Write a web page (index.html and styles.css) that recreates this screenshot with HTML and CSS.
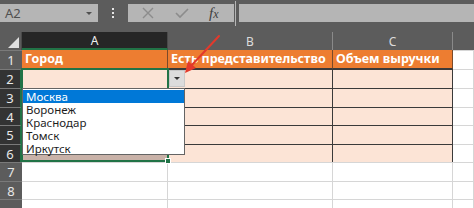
FILE: index.html
```html
<!DOCTYPE html>
<html lang="ru">
<head>
<meta charset="utf-8">
<link rel="stylesheet" href="styles.css">
</head>
<body>
<div class="app">
  <div class="fbar">
    <div class="namebox"><span class="nb-text">A2</span><span class="nb-caret"></span></div>
    <div class="dots"><i></i><i></i><i></i></div>
    <div class="fbtns">
      <svg class="ico" width="14" height="14" viewBox="0 0 14 14"><path d="M2 2 L12 12 M12 2 L2 12" stroke="#8c8c8c" stroke-width="1.4" fill="none"/></svg>
      <svg class="ico" width="16" height="14" viewBox="0 0 16 14"><path d="M2 7 L6 11 L14 3" stroke="#8c8c8c" stroke-width="1.6" fill="none"/></svg>
      <span class="fx"><i>f</i><span>x</span></span>
    </div>
    <div class="fsep"></div>
    <div class="finput"></div>
  </div>
  <div class="sheet">
    <div class="grid">
      <div class="corner"><span class="tri"></span></div>
      <div class="ch ch-sel">A</div>
      <div class="ch">B</div>
      <div class="ch">C</div>
      <div class="ch ch-last"></div>

      <div class="rh">1</div>
      <div class="c hd">Город</div>
      <div class="c hd">Есть представительство</div>
      <div class="c hd">Объем выручки</div>
      <div class="c e"></div>

      <div class="rh rh-sel">2</div>
      <div class="c p"></div>
      <div class="c p"></div>
      <div class="c p"></div>
      <div class="c e"></div>

      <div class="rh rh-sel">3</div>
      <div class="c ps"></div>
      <div class="c p"></div>
      <div class="c p"></div>
      <div class="c e"></div>

      <div class="rh rh-sel">4</div>
      <div class="c ps"></div>
      <div class="c p"></div>
      <div class="c p"></div>
      <div class="c e"></div>

      <div class="rh rh-sel">5</div>
      <div class="c ps"></div>
      <div class="c p"></div>
      <div class="c p"></div>
      <div class="c e"></div>

      <div class="rh rh-sel">6</div>
      <div class="c ps"></div>
      <div class="c p"></div>
      <div class="c p"></div>
      <div class="c e"></div>

      <div class="rh">7</div>
      <div class="c e"></div>
      <div class="c e"></div>
      <div class="c e"></div>
      <div class="c e"></div>

      <div class="rh">8</div>
      <div class="c e"></div>
      <div class="c e"></div>
      <div class="c e"></div>
      <div class="c e"></div>

      <div class="rh"></div>
      <div class="c e"></div>
      <div class="c e"></div>
      <div class="c e"></div>
      <div class="c e"></div>
    </div>

    <div class="selection"><span class="handle"></span></div>
    <div class="ddbtn"><span class="ddtri"></span></div>
    <ul class="list">
      <li class="on">Москва</li>
      <li>Воронеж</li>
      <li>Краснодар</li>
      <li>Томск</li>
      <li>Иркутск</li>
    </ul>
    <svg class="arrow" width="50" height="50" viewBox="0 0 50 50">
      <path d="M39 4 L11 34" stroke="#e2392c" stroke-width="2" fill="none" stroke-linecap="round"/>
      <path d="M5 41 L8 29 L16 36 Z" fill="#e2392c"/>
    </svg>
  </div>
</div>
</body>
</html>
```
FILE: styles.css
```css
* { box-sizing: border-box; margin: 0; padding: 0; }
html, body { width: 474px; height: 208px; overflow: hidden; background: #5c5c5c; }
body { font-family: "Noto Sans", "Open Sans", sans-serif; }

.app { display: flex; flex-direction: column; height: 208px; }

.fbar {
  display: flex;
  align-items: stretch;
  height: 36px;
  padding: 4px 0 10px 0;
  background: #5c5c5c;
}
.namebox {
  width: 98px;
  background: #b5b5b5;
  display: flex;
  align-items: center;
  justify-content: space-between;
  padding: 0 6px 0 5px;
}
.nb-text { font-size: 13px; color: #505050; }
.nb-caret {
  width: 0; height: 0;
  border-left: 3px solid transparent;
  border-right: 3px solid transparent;
  border-top: 3px solid #505050;
}
.dots {
  width: 30px;
  display: flex;
  flex-direction: column;
  align-items: center;
  justify-content: center;
  gap: 2px;
}
.dots i { display: block; width: 2px; height: 2px; background: #e6e6e6; }
.fbtns {
  width: 106px;
  background: #b5b5b5;
  display: flex;
  align-items: center;
  justify-content: space-around;
  padding: 0 6px 0 4px;
}
.fx { font-family: "Liberation Serif", serif; font-size: 15px; color: #404040; }
.fx i { font-style: italic; }
.fx span { font-size: 12px; font-style: italic; }
.fsep { width: 4px; border-left: 1px solid #b5b5b5; margin-left: 1px; margin-top: -3px; margin-bottom: -4px; }
.finput { flex: 1; background: #b5b5b5; }

.sheet { position: relative; flex: 1; }
.grid {
  display: grid;
  grid-template-columns: 22px 146px 165px 120px 1fr;
  grid-template-rows: 18px 19px 19px 19px 18px 19px 18px 19px 18px 19px;
}
.corner { background: #5c5c5c; position: relative; border-right: 1px solid #4a4a4a; }
.tri {
  position: absolute; right: 2px; bottom: 2px;
  width: 0; height: 0;
  border-left: 11px solid transparent;
  border-bottom: 11px solid #e0e0e0;
}
.ch {
  background: #5c5c5c;
  color: #dcdcdc;
  font-size: 12px;
  display: flex; align-items: center; justify-content: center;
  border-right: 1px solid #8a8a8a;
}
.ch-sel { background: #262626; color: #f0f0f0; border-bottom: 2px solid #217346; border-right-color: #4a4a4a; }
.ch-last { border-right: none; }

.rh {
  background: #5c5c5c;
  color: #e8e8e8;
  font-size: 13px;
  display: flex; align-items: center; justify-content: center;
  border-top: 1px solid #7a7a7a;
}
.rh-sel { background: #333333; border-right: 2px solid #217346; }

.c { border-top: 1px solid #d6d6d6; border-right: 1px solid #d6d6d6; }
.e { background: #ffffff; }
.hd {
  background: #ed7d31;
  color: #ffffff;
  font-weight: 700;
  font-size: 12.5px;
  line-height: 18px;
  padding-left: 3px;
  white-space: nowrap;
  overflow: hidden;
  border-top: none;
  border-right: 1px solid #7a4a2a;
  border-bottom: 1px solid #3a3a3a;
}
.p { background: #fce4d6; border-top: 1px solid #3a3a3a; border-right: 1px solid #3a3a3a; }
.ps { background: #c9b2a8; border-top: 1px solid #3a3a3a; border-right: 1px solid #3a3a3a; }

.selection {
  position: absolute;
  left: 21px; top: 36px;
  width: 148px; height: 94px;
  border: 2px solid #217346;
  pointer-events: none;
}
.handle {
  position: absolute; right: -4px; bottom: -4px;
  width: 6px; height: 6px;
  background: #217346;
  border: 1px solid #ffffff;
}
.ddbtn {
  position: absolute;
  left: 169px; top: 38px;
  width: 16px; height: 17px;
  background: #dcdcdc;
  border: 1px solid #c8c8c8;
  display: flex; align-items: center; justify-content: center;
}
.ddtri {
  width: 0; height: 0;
  border-left: 3px solid transparent;
  border-right: 3px solid transparent;
  border-top: 3px solid #333;
}
.list {
  position: absolute;
  left: 22px; top: 56px;
  width: 163px; height: 67px;
  background: #ffffff;
  border: 1px solid #646464;
  list-style: none;
  padding-top: 1px;
}
.list li {
  font-size: 11.5px;
  line-height: 13px;
  height: 13px;
  padding-left: 3px;
  color: #1e1e1e;
}
.list li.on { background: #0078d7; color: #ffffff; }

.arrow { position: absolute; left: 180px; top: 0; }
```
